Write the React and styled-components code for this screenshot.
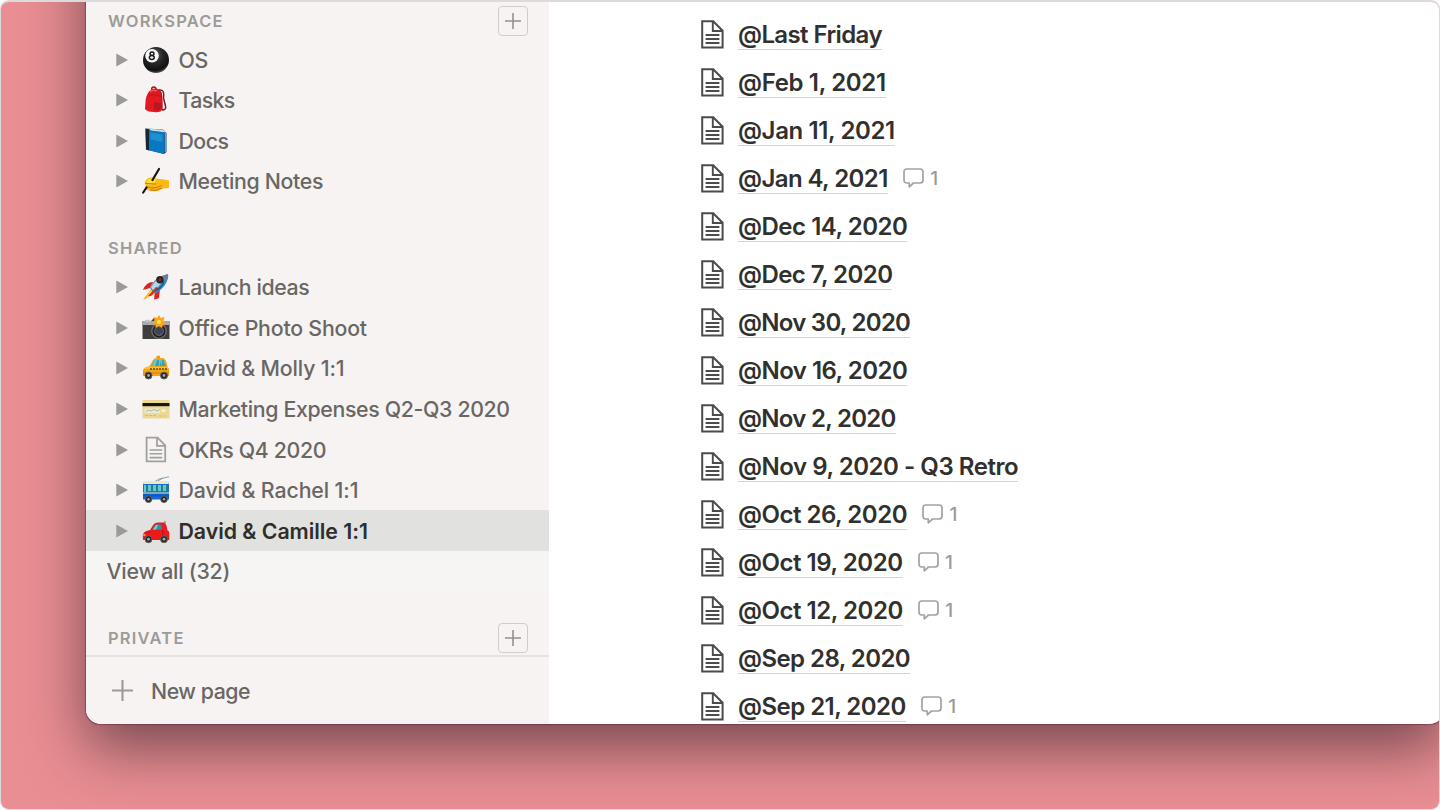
import React from 'react';
import styled, { createGlobalStyle } from 'styled-components';

const Global = createGlobalStyle`
  * { box-sizing: border-box; }
  body { margin: 0; background: #fff; font-family: Inter, "Liberation Sans", sans-serif; }
`;

const Frame = styled.div`
  display: flex;
  align-items: flex-start;
  width: 1440px;
  height: 810px;
  overflow: hidden;
  border: 1px solid #dcdada;
  border-top-width: 2px;
  border-radius: 9px;
  background: #e98e92;
  padding-left: 85px;
`;

const Shade = styled.div`
  flex: none;
  width: 1358px;
  margin-top: -80px;
  padding-top: 80px;
  border-radius: 0 0 15px 15px;
  box-shadow: 0 0 1px 0.5px rgba(110, 30, 50, 0.5), 0 24px 58px rgba(20, 15, 25, 0.54);
`;

const Window = styled.div`
  display: flex;
  width: 1358px;
  height: 722px;
  overflow: hidden;
  border-radius: 0 0 15px 15px;
  background: #fff;
`;

const Sidebar = styled.aside`
  display: flex;
  flex-direction: column;
  flex: none;
  width: 463px;
  background: #f6f3f2;
`;

const SectionHeader = styled.div`
  display: flex;
  align-items: center;
  justify-content: space-between;
  flex: none;
  height: ${p => p.$height}px;
  margin-top: ${p => p.$gap || 0}px;
  padding: 0 21px 0 22px;
  font-size: 16.5px;
  font-weight: 600;
  letter-spacing: 1.2px;
  color: #9c9b98;
`;

const AddButton = styled.button`
  display: flex;
  align-items: center;
  justify-content: center;
  width: 30px;
  height: 30px;
  padding: 0;
  border: 1.5px solid #cfcdcb;
  border-radius: 4px;
  background: transparent;
`;

const PageRow = styled.div`
  display: flex;
  align-items: center;
  flex: none;
  height: 40.57px;
  padding-left: 30px;
  background: ${p => (p.$active ? '#e1e1df' : 'transparent')};
`;

const Emoji = styled.svg`
  width: 28px;
  height: 28px;
  margin: 0 8.5px 0 14px;
  flex: none;
`;

const PageName = styled.span`
  white-space: nowrap;
  font-size: 21.3px;
  line-height: 28px;
  font-weight: ${p => (p.$active ? 600 : 500)};
  letter-spacing: ${p => p.$track || 0}px;
  color: ${p => (p.$active ? '#2f2e2b' : '#696764')};
`;

const ViewAll = styled.div`
  display: flex;
  align-items: center;
  flex: none;
  height: 40.57px;
  padding-left: 20.5px;
  background: #f6f5f4;
`;

const Footer = styled.div`
  display: flex;
  align-items: center;
  gap: 18px;
  flex: 1;
  padding-left: 26px;
  border-top: 2px solid #e4e1e0;
`;

const Main = styled.main`
  flex: 1;
  padding: 8px 0 0 152px;
`;

const EntryRow = styled.div`
  display: flex;
  align-items: center;
  height: 48px;
`;

const EntryTitle = styled.span`
  margin-left: 14px;
  height: 32px;
  line-height: 34px;
  white-space: nowrap;
  font-size: 24px;
  font-weight: 600;
  letter-spacing: ${p => p.$track || 0}px;
  color: #30302e;
  border-bottom: 1.5px solid #d4d4d3;
`;

const Comments = styled.span`
  display: flex;
  align-items: center;
  gap: 6.5px;
  margin-left: 15px;
  font-size: 19px;
  font-weight: 500;
  color: #9b9a98;
`;

const Plus = ({ size, color = '#92918e' }) => (
  <svg width={size} height={size} viewBox="0 0 20 20">
    <path d="M10 0V20M0 10H20" stroke={color} strokeWidth="2" />
  </svg>
);

const Arrow = () => (
  <svg width="12" height="14" viewBox="0 0 12 14"><path d="M.3 .5L12 7L.3 13.5Z" fill="#9b9a98" /></svg>
);

const DocIcon = () => (
  <svg width="23" height="29" viewBox="0 0 23 29" fill="none" stroke="#4c4b49" strokeWidth="2">
    <path d="M1.2 1.2H12.2L21.6 10.7V27.4H1.2Z" />
    <path d="M11.8 1.5V11H21.5" strokeWidth="1.9" />
    <path d="M4.6 15H18.4M4.6 19H18.4M4.6 23H18.4" strokeWidth="1.9" />
  </svg>
);

const Bubble = () => (
  <svg width="21" height="20" viewBox="0 0 21 20" fill="none" stroke="#a3a2a0" strokeWidth="1.7">
    <path d="M3.8 1H17Q20 1 20 4V12Q20 15 17 15H10.5L6.3 18.8V15H3.8Q1 15 1 12V4Q1 1 3.8 1Z" strokeLinejoin="round" />
  </svg>
);

const art = {
  ball: (
    <>
      <defs><radialGradient id="ball" cx=".45" cy=".3" r=".75"><stop offset="0" stopColor="#666" /><stop offset=".4" stopColor="#292929" /><stop offset=".8" stopColor="#111" /><stop offset="1" stopColor="#777" /></radialGradient></defs>
      <circle cx="14" cy="14" r="13" fill="url(#ball)" />
      <circle cx="10" cy="9.8" r="6.8" fill="#f7f7f7" />
      <g fill="none" stroke="#181818" strokeWidth="1.5"><ellipse cx="10" cy="7.8" rx="1.9" ry="1.7" /><ellipse cx="9.8" cy="11.5" rx="2.4" ry="2" /></g>
    </>
  ),
  backpack: (
    <>
      <path d="M17 4Q23 3 21.5 12L23.5 20Q24.5 24 20 24" fill="none" stroke="#7c2022" strokeWidth="1.5" />
      <path d="M10 4Q9 1 12 1Q14 1 14 4" fill="none" stroke="#a7121b" strokeWidth="1.5" />
      <path d="M5.5 8Q8 2.5 14 2.5Q20 3.5 20 9L20.5 23Q19 27 12 26Q5 26 3 23L3.6 14Q4 11 5.5 8Z" fill="#e51720" />
      <path d="M5.5 10.5Q12 6.5 19.5 11M17 4Q21 7 20 24" fill="none" stroke="#b3161e" strokeWidth=".9" />
      <path d="M12 16L19 17L18.5 24L12 24Z" fill="#b81720" />
      <path d="M8 6Q11 3.5 15 5" stroke="#ff5a5a" strokeWidth="1.2" fill="none" />
    </>
  ),
  book: (
    <>
      <path d="M3.5 1.5L21 2.5L24.5 6V25L22 27L4 22.5Z" fill="#07528e" />
      <path d="M7 1.7L21 2.7L24 5.4L9 4Z" fill="#cfdde2" />
      <path d="M3.5 1.5L7 3V23.5L4 22.5Z" fill="#182630" />
      <path d="M7 3.2L22 5.2V27L7 23.2Z" fill="#0878c1" />
      <path d="M8.5 5.4L20.5 7.4V15L8.5 12.6Z" fill="#1b90d3" />
      <path d="M23.3 6V25" stroke="#a8cada" strokeWidth=".8" />
    </>
  ),
  writing: (
    <>
      <path d="M4 13Q7 9 13 11L16 12Q20 11.5 27 13.5V21L21 21.5Q16 25 10 24L5 23Q2 21 4 18L2.5 16Z" fill="#fcb912" />
      <path d="M4.5 14Q9 9.5 14 12L13 16L6 18Z" fill="#ffdc3b" />
      <path d="M3.5 16.5L14 17M6 20Q11 22.5 20 18.5M8 23Q14 24.5 20 21" fill="none" stroke="#c8701c" strokeWidth="1" />
      <path d="M17 2L10.5 13M4.5 20.5L1.2 25.5" stroke="#171717" strokeWidth="2.2" strokeLinecap="round" />
    </>
  ),
  rocket: (
    <>
      <path d="M9 16L1 27L12 21Z" fill="#ffa20b" /><path d="M9 17L4 25L11 20Z" fill="#ffe34b" />
      <path d="M11 9Q4 9 1 17L8 15ZM18 16L17 25Q13 27 12 26L13 18Z" fill="#dd2420" />
      <path d="M8 15Q12 4 26 1Q27 12 13 21Z" fill="#2b91cf" />
      <path d="M9 14Q15 4 26 1Q21 8 12 19Z" fill="#b9d5de" />
      <path d="M20 3L26 1Q27 5 24 8Z" fill="#6f7f8b" />
      <path d="M14 14L6 23L9 23L17 15Z" fill="#d62b1e" />
      <circle cx="18" cy="6.7" r="3.8" fill="#292428" /><circle cx="18" cy="6.7" r="1.7" fill="#8a211e" />
      <path d="M22 9Q20 14 14 18" stroke="#135d95" strokeWidth="1.3" fill="none" />
    </>
  ),
  camera: (
    <>
      <path d="M.5 7H9L12 4H19L21 7H27.5V25H.5Z" fill="#3e3e3e" />
      <path d="M.5 7H27.5V11H.5Z" fill="#aaa" /><path d="M3 5.8H8V8H3Z" fill="#c4c4c4" />
      <circle cx="17" cy="17" r="7.2" fill="#202225" stroke="#777" strokeWidth="1.1" />
      <circle cx="17" cy="17" r="4.5" fill="#44434c" stroke="#77777b" strokeWidth=".7" /><circle cx="19" cy="20.5" r="1.1" fill="#5551b3" />
      <path d="M17 1L18.8 4L22.5 3L21.5 7L24 9L21 10.5L20 14L17 12L13.5 14L13.5 10.5L10.5 9L12.5 6L11.5 3L15 4Z" fill="#ffa31a" />
      <circle cx="17" cy="8" r="2" fill="#fff05d" />
    </>
  ),
  taxi: (
    <>
      <path d="M14.5 1.8H18V5H14.5Z" fill="#f09713" />
      <path d="M1 16Q2 13 7.5 12.2L11 6Q12 4 15 4H21Q24.5 5 25.2 12L27 15V22H1Z" fill="#f6a313" />
      <path d="M9.5 12L12.5 6H17V12ZM18 6H21.5L23.8 12H18Z" fill="#31a3ba" />
      <path d="M10 12L13 6H15L13 12ZM18 6H20L19.5 12Z" fill="#6fcbd0" />
      <path d="M3 14H26" stroke="#ffce2d" strokeWidth="1.6" /><path d="M8 15H25" stroke="#674421" strokeWidth="1.7" strokeDasharray="2 1" />
      <path d="M1 19H27" stroke="#e08a10" strokeWidth="1.5" />
      <g fill="#25272a" stroke="#68615b"><circle cx="6.5" cy="21.5" r="3.5" /><circle cx="22" cy="21.5" r="3.5" /></g><g fill="#aaa"><circle cx="6.5" cy="21.5" r="1.4" /><circle cx="22" cy="21.5" r="1.4" /></g>
    </>
  ),
  card: (
    <>
      <rect x=".5" y="5" width="27" height="18.5" rx="1" fill="#ead895" />
      <path d="M.5 8H27.5V11.2H.5Z" fill="#17150e" />
      <path d="M2.5 13.5H18V18H2.5Z" fill="#f1ead2" /><path d="M4 16.5L7 15L9 16L12 14.5L15 16L18 14.5" stroke="#7e9eac" fill="none" strokeWidth=".7" />
      <path d="M19.5 14.5H23.5V17H19.5Z" fill="#f8f0d4" /><path d="M3 20.5H14M17 21H25" stroke="#d3bd70" strokeWidth="1.1" strokeDasharray="3 1" />
    </>
  ),
  page: (
    <g fill="none" stroke="#a1a09e" strokeWidth="1.8"><path d="M4.6 1.7H15.6L23.2 9.4V25.4H4.6Z" /><path d="M15 2V9.8H23" /><path d="M7.6 14H20.2M7.6 17.8H20.2M7.6 21.6H20.2" strokeWidth="1.6" /></g>
  ),
  bus: (
    <>
      <path d="M12 6L17 3L27 .8M14 6L21 2" stroke="#829aa4" strokeWidth=".9" fill="none" />
      <path d="M1 9Q1 6 4 6H25Q27 6 27 9V23.5H1Z" fill="#1769d4" />
      <path d="M3 5H25L27 8H1Z" fill="#eee9bd" />
      <path d="M1.3 9H26.7V16.5H1.3Z" fill="#247c91" />
      <path d="M2 9H4V16H2ZM6 9H9V15H6ZM11 9H14V15H11ZM16 9H19V15H16ZM21 9H24V15H21Z" fill="#62c7ce" />
      <path d="M1 17H27" stroke="#cbd9c8" strokeWidth="1.1" /><path d="M1 19.5H27" stroke="#0758cf" strokeWidth="2" />
      <g fill="#25262a" stroke="#5b6064"><circle cx="6.5" cy="23.2" r="3.3" /><circle cx="22" cy="23.2" r="3.3" /></g><g fill="#aaa"><circle cx="6.5" cy="23.2" r="1.2" /><circle cx="22" cy="23.2" r="1.2" /></g>
    </>
  ),
  car: (
    <>
      <path d="M.8 18Q1.5 14 8 13L11.5 7.5Q13 5.7 16 5.5H22Q24.5 6 25.3 13Q27.5 14 27.3 17V23H1Z" fill="#ed191b" />
      <path d="M10 13L13.4 7.5H19.3L20 12.6Z" fill="#2398af" /><path d="M11 12.5L14 8H16L14 12.5Z" fill="#7ccdd2" />
      <path d="M20.5 13V19M3 16L9 15M21 15H23" stroke="#b7131b" strokeWidth=".8" /><path d="M23 4V7" stroke="#aa555c" />
      <path d="M1.2 18H3.5" stroke="#ffb35e" strokeWidth="1.3" />
      <g fill="#25272a" stroke="#68615b"><circle cx="6.5" cy="22.2" r="3.5" /><circle cx="22" cy="22.2" r="3.5" /></g><g fill="#aaa"><circle cx="6.5" cy="22.2" r="1.4" /><circle cx="22" cy="22.2" r="1.4" /></g>
    </>
  ),
};

const workspace = [
  { icon: 'ball', name: 'OS', track: -0.3 },
  { icon: 'backpack', name: 'Tasks', track: -0.65 },
  { icon: 'book', name: 'Docs', track: -0.5 },
  { icon: 'writing', name: 'Meeting Notes', track: -0.32 },
];

const shared = [
  { icon: 'rocket', name: 'Launch ideas', track: -0.37 },
  { icon: 'camera', name: 'Office Photo Shoot', track: -0.2 },
  { icon: 'taxi', name: 'David & Molly 1:1', track: -0.14 },
  { icon: 'card', name: 'Marketing Expenses Q2-Q3 2020', track: -0.34 },
  { icon: 'page', name: 'OKRs Q4 2020', track: -0.34 },
  { icon: 'bus', name: 'David & Rachel 1:1', track: -0.1 },
  { icon: 'car', name: 'David & Camille 1:1', track: -0.03, active: true },
];

const entries = [
  { title: '@Last Friday', track: -0.6 },
  { title: '@Feb 1, 2021', track: -0.34 },
  { title: '@Jan 11, 2021', track: -0.38 },
  { title: '@Jan 4, 2021', track: -0.58, comments: 1 },
  { title: '@Dec 14, 2020', track: -0.48 },
  { title: '@Dec 7, 2020', track: -0.56 },
  { title: '@Nov 30, 2020', track: -0.73 },
  { title: '@Nov 16, 2020', track: -0.52 },
  { title: '@Nov 2, 2020', track: -0.72 },
  { title: '@Nov 9, 2020 - Q3 Retro', track: -0.46 },
  { title: '@Oct 26, 2020', track: -0.48, comments: 1 },
  { title: '@Oct 19, 2020', track: -0.46, comments: 1 },
  { title: '@Oct 12, 2020', track: -0.46, comments: 1 },
  { title: '@Sep 28, 2020', track: -0.56 },
  { title: '@Sep 21, 2020', track: -0.53, comments: 1 },
];

const Page = ({ icon, name, active, track }) => (
  <PageRow $active={active}>
    <Arrow />
    <Emoji viewBox="0 0 28 28">{art[icon]}</Emoji>
    <PageName $active={active} $track={track}>{name}</PageName>
  </PageRow>
);

export default function App() {
  return (
    <>
      <Global />
      <Frame>
        <Shade>
          <Window>
            <Sidebar>
              <SectionHeader $height={37.3}>WORKSPACE<AddButton><Plus size={16} /></AddButton></SectionHeader>
              {workspace.map(p => <Page key={p.name} {...p} />)}
              <SectionHeader $height={38} $gap={27.5}>SHARED</SectionHeader>
              {shared.map(p => <Page key={p.name} {...p} />)}
              <ViewAll><PageName $track={-0.24}>View all (32)</PageName></ViewAll>
              <SectionHeader $height={34} $gap={29.9}>PRIVATE<AddButton><Plus size={16} /></AddButton></SectionHeader>
              <Footer><Plus size={21} color="#9b9a98" /><PageName $track={-0.45}>New page</PageName></Footer>
            </Sidebar>
            <Main>
              {entries.map(e => (
                <EntryRow key={e.title}>
                  <DocIcon />
                  <EntryTitle $track={e.track}>{e.title}</EntryTitle>
                  {e.comments && <Comments><Bubble />{e.comments}</Comments>}
                </EntryRow>
              ))}
            </Main>
          </Window>
        </Shade>
      </Frame>
    </>
  );
}
